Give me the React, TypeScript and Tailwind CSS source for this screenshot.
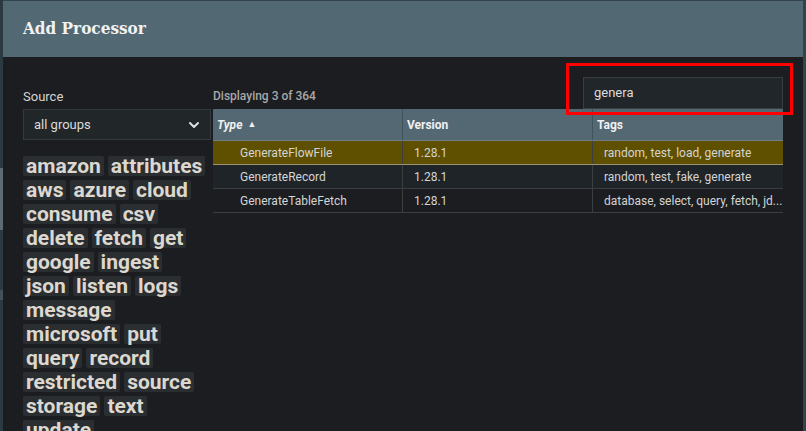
import React from "react";
import { ChevronDown } from "lucide-react";

const tags = [
  "amazon", "attributes", "aws", "azure", "cloud", "consume", "csv", "delete", "fetch", "get",
  "google", "ingest", "json", "listen", "logs", "message", "microsoft", "put", "query", "record",
  "restricted", "source", "storage", "text", "update",
];

const rows = [
  { type: "GenerateFlowFile", version: "1.28.1", tags: "random, test, load, generate", selected: true },
  { type: "GenerateRecord", version: "1.28.1", tags: "random, test, fake, generate", selected: false, alt: true },
  { type: "GenerateTableFetch", version: "1.28.1", tags: "database, select, query, fetch, jd...", selected: false },
];

export default function App() {
  return (
    <div
      className="w-[806px] h-[431px] overflow-hidden flex bg-[#2d3b43]"
      style={{ fontFamily: "Roboto, 'Liberation Sans', sans-serif" }}
    >
      <div className="w-[3px] shrink-0 flex flex-col bg-[#2b3940]">
        <div className="h-[168px]" />
        <div className="h-[62px] bg-[#5d6c73]" />
        <div className="h-[60px]" />
        <div className="h-[10px] bg-[#44535a]" />
      </div>
      <div className="flex-1 min-w-0 flex flex-col border-t border-[#34434a] h-[431px]">
        <div className="h-[56px] shrink-0 bg-[#526873] flex items-center pl-[20px] pb-[1px]">
          <span
            className="text-[17px] font-bold text-[#f2f2f2] [font-stretch:87.5%]"
            style={{ fontFamily: "'DejaVu Serif Condensed', 'DejaVu Serif', serif" }}
          >
            Add Processor
          </span>
        </div>
        <div className="flex-1 min-h-0 overflow-hidden bg-[#1b1d20] flex pl-[20px] pr-[20px] pt-[20px] gap-[2px]">
          <div className="w-[188px] shrink-0 flex flex-col">
            <div className="h-[32px] shrink-0 flex items-end pb-[4px] text-[13px] leading-[16px] text-[#d4d4d4]">
              Source
            </div>
            <div className="h-[31px] shrink-0 bg-[#212629] border border-[#33393d] flex items-center justify-between pl-[10px] pr-[8px] text-[13px] text-[#dcdcdc]">
              <span>all groups</span>
              <ChevronDown size={16} strokeWidth={3} className="text-[#e0e0e0]" />
            </div>
            <div className="mt-[16px] shrink-0 flex flex-wrap gap-[4px] w-[186px]">
              {tags.map((t) => (
                <span
                  key={t}
                  className="bg-[#2b2e30] text-[#dcd8d0] font-bold text-[21px] leading-[20px] h-[20px] px-[3px] rounded-[2px] whitespace-nowrap"
                >
                  {t}
                </span>
              ))}
            </div>
          </div>
          <div className="flex-1 flex flex-col">
            <div className="h-[32px] shrink-0 flex items-end justify-between">
              <span className="pb-[5px] text-[12px] leading-[16px] font-medium text-[#a8a8a8]">
                Displaying 3 of 364
              </span>
              <div className="relative w-[200px] h-[32px]">
                <div className="w-full h-full bg-[#21262a] border border-[#393e42] flex items-center pl-[10px] text-[13px] text-[#dcdcdc]">
                  genera
                </div>
                <div className="absolute left-[-17px] top-[-14px] right-[-10px] bottom-[-6px] border-[3px] border-[#ff0000]" />
              </div>
            </div>
            <div className="flex flex-col text-[12px]">
              <div className="h-[32px] bg-[#536873] grid grid-cols-[190px_190px_190px] border-b border-[#6e7e86] text-[#f0f0f0] font-bold">
                <div className="flex items-center pl-[4px] border-r border-[#40525b]">
                  <span className="italic">Type</span>
                  <span className="ml-[5px] text-[9px] leading-none">▲</span>
                </div>
                <div className="flex items-center pl-[4px] border-r border-[#40525b]">Version</div>
                <div className="flex items-center pl-[4px]">Tags</div>
              </div>
              {rows.map((r) => (
                <div
                  key={r.type}
                  className={
                    "h-[24px] grid grid-cols-[190px_190px_190px] border-b text-[#d4d4d4] " +
                    (r.selected
                      ? "bg-[#5f5000] border-[#9d9270]"
                      : r.alt
                      ? "bg-[#1e2428] border-[#3c3f42]"
                      : "bg-[#1b1d20] border-[#3c3f42]")
                  }
                >
                  <div className="flex items-center pl-[27px] border-r border-[#3c3f42] whitespace-nowrap overflow-hidden">
                    {r.type}
                  </div>
                  <div className="flex items-center pl-[11px] border-r border-[#3c3f42]">{r.version}</div>
                  <div className="flex items-center pl-[11px] whitespace-nowrap">{r.tags}</div>
                </div>
              ))}
            </div>
          </div>
        </div>
      </div>
      <div className="w-[3px] shrink-0 bg-[#34444c]" />
    </div>
  );
}
